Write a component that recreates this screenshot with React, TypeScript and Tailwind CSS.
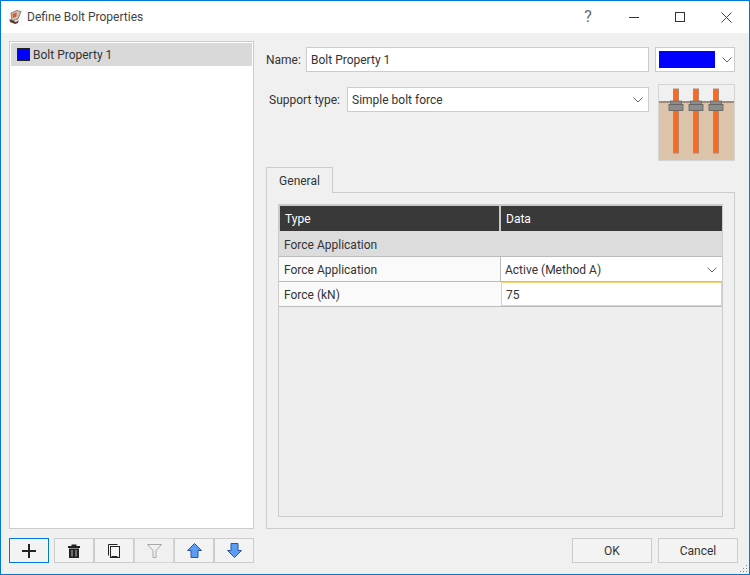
import React from "react";

const Chevron = ({ className = "" }: { className?: string }) => (
  <svg width="10" height="6" viewBox="0 0 10 6" className={className} fill="none" stroke="#666" strokeWidth="1">
    <path d="M0.5 0.5 L5 5 L9.5 0.5" />
  </svg>
);

const AppIcon = () => (
  <svg width="16" height="16" viewBox="0 0 16 16" className="shrink-0">
    <rect x="0" y="0" width="16" height="16" fill="#fafafa" />
    <path d="M4 4 L10 1.5 L14 2.5 L11 10 L5 12 Z" fill="#c9c3b8" stroke="#6a5a50" strokeWidth="0.7" />
    <path d="M5.5 5 L9.5 3.5 L9.5 7.5 L6 9 Z" fill="#e0552a" />
    <path d="M2.5 10 L9 13 L11.5 11 L11 14 L8 15 L3 13 Z" fill="#5a3a32" />
  </svg>
);

const Thumb = () => (
  <svg width="77" height="77" viewBox="0 0 77 77" className="block">
    <rect x="0.5" y="0.5" width="76" height="76" fill="#f0f0f0" stroke="#d4d4d4" />
    <rect x="1" y="18" width="75" height="58" fill="#dcc4aa" />
    <rect x="1" y="17" width="75" height="2" fill="#a08a78" />
    {[18, 38, 58].map((x) => (
      <g key={x}>
        <rect x={x - 2.5} y="5" width="5" height="64" fill="#fb6a1e" stroke="#b08a70" strokeWidth="1" />
        <rect x={x - 5.5} y="17" width="11" height="3.5" fill="#8a8a8a" stroke="#666" strokeWidth="0.7" />
        <rect x={x - 7} y="20.5" width="14" height="6" fill="#8c8c8c" stroke="#5f5f5f" strokeWidth="0.8" />
      </g>
    ))}
  </svg>
);

const ToolButton = ({
  children,
  first,
  disabled,
}: {
  children: React.ReactNode;
  first?: boolean;
  disabled?: boolean;
}) => (
  <button
    className={
      first
        ? "w-[40px] h-[25px] flex items-center justify-center bg-[#f3f3f3] border border-[#0078d7]"
        : disabled
        ? "w-[40px] h-[25px] flex items-center justify-center bg-[#f0f0f0] border border-[#d6d6d6]"
        : "w-[40px] h-[25px] flex items-center justify-center bg-[#f3f3f3] border border-[#cccccc]"
    }
  >
    {children}
  </button>
);

export default function App() {
  return (
    <div
      className="w-[750px] h-[575px] flex flex-col bg-[#f0f0f0] border border-[#0078d7] text-[12px] text-[#333333] relative overflow-hidden"
      style={{ fontFamily: 'Roboto, "Noto Sans", sans-serif' }}
    >
      {/* title bar */}
      <div className="h-[32px] bg-white flex items-center shrink-0">
        <div className="ml-[6px]">
          <AppIcon />
        </div>
        <span className="ml-[4px] text-[#444]">Define Bolt Properties</span>
        <div className="ml-auto flex items-center text-[#555]">
          <span className="w-[46px] text-center text-[16px] text-[#666]">?</span>
          <div className="w-[46px] flex justify-center">
            <div className="w-[10px] h-px bg-[#333]" />
          </div>
          <div className="w-[46px] flex justify-center">
            <div className="w-[10px] h-[10px] border border-[#333]" />
          </div>
          <div className="w-[46px] flex justify-center">
            <svg width="11" height="11" viewBox="0 0 11 11" stroke="#444" strokeWidth="1">
              <path d="M0.5 0.5 L10.5 10.5 M10.5 0.5 L0.5 10.5" />
            </svg>
          </div>
        </div>
      </div>

      {/* main */}
      <div className="flex-1 flex flex-col px-[8px] pt-[8px]">
        <div className="flex h-[488px] gap-[12px]">
          {/* list */}
          <div className="w-[245px] h-full bg-white border border-[#cccccc] p-[1px]">
            <div className="h-[23px] bg-[#d9d9d9] flex items-center pl-[6px]">
              <div className="w-[13px] h-[13px] bg-[#0000ff] border border-[#222]" />
              <span className="ml-[3px]">Bolt Property 1</span>
            </div>
          </div>

          {/* right */}
          <div className="w-[469px] flex flex-col">
            <div className="flex pt-[6px] h-[43px]">
              <span className="w-[40px] h-[25px] flex items-center">Name:</span>
              <div className="w-[343px] h-[25px] bg-white border border-[#cccccc] flex items-center pl-[4px]">
                Bolt Property 1
              </div>
              <div className="ml-[6px] w-[80px] h-[25px] bg-white border border-[#cccccc] flex items-center pl-[3px]">
                <div className="w-[56px] h-[17px] bg-[#0000ff]" />
                <Chevron className="ml-[7px]" />
              </div>
            </div>
            <div className="flex h-[83px]">
              <span className="w-[81px] h-[25px] flex items-center justify-end pr-[7px] mt-[3px] whitespace-nowrap">
                Support type:
              </span>
              <div className="w-[302px] h-[25px] mt-[3px] bg-white border border-[#cccccc] flex items-center pl-[4px] pr-[5px] justify-between">
                <span>Simple bolt force</span>
                <Chevron />
              </div>
              <div className="ml-[9px]">
                <Thumb />
              </div>
            </div>
            <div className="flex">
              <div className="w-[67px] h-[26px] -mb-px bg-[#f0f0f0] border border-[#cccccc] border-b-0 flex items-center justify-center pt-[1px] z-10">
                General
              </div>
            </div>
            <div className="flex-1 min-h-0 border border-[#cccccc] p-[11px]">
              <div className="h-full w-[445px] border border-[#cccccc] bg-[#eeeeee] flex flex-col">
                <div className="flex h-[26px] bg-[#393939] text-white border-t border-l border-t-[#c8c8c8] border-l-[#c8c8c8] shrink-0">
                  <div className="w-[221px] pl-[5px] flex items-center border-r-2 border-[#c8c8c8]">Type</div>
                  <div className="flex-1 pl-[5px] flex items-center">Data</div>
                </div>
                <div className="h-[26px] bg-[#dcdcdc] border-b border-[#bbbbbb] flex items-center pl-[5px] pt-[2px] shrink-0">
                  Force Application
                </div>
                <div className="h-[25px] flex border-b border-[#bbbbbb] shrink-0">
                  <div className="w-[222px] bg-[#fafafa] border-r border-[#bbbbbb] flex items-center pl-[5px] pt-[2px]">
                    Force Application
                  </div>
                  <div className="flex-1 bg-white flex items-center justify-between pl-[4px] pr-[5px] pt-[1px]">
                    <span>Active (Method A)</span>
                    <Chevron />
                  </div>
                </div>
                <div className="h-[25px] flex border-b border-[#bbbbbb] shrink-0">
                  <div className="w-[222px] bg-[#fafafa] flex items-center pl-[5px] pt-[2px]">Force (kN)</div>
                  <div className="flex-1 bg-white border border-[#f2d675] flex items-center pl-[4px] pt-[2px]">75</div>
                </div>
              </div>
            </div>
          </div>
        </div>

        {/* bottom */}
        <div className="flex mt-[9px] items-start">
          <ToolButton first>
            <svg width="14" height="14" viewBox="0 0 14 14" stroke="#222" strokeWidth="2">
              <path d="M7 0 V14 M0 7 H14" />
            </svg>
          </ToolButton>
          <div className="w-[5px]" />
          <ToolButton>
            <svg width="12" height="14" viewBox="0 0 12 14">
              <path d="M3.5 0.5 H8.5 V2 H12 V4 H0 V2 H3.5 Z" fill="#222" />
              <path d="M1 4.5 H11 V14 H1 Z" fill="#222" />
              <path d="M4 6 V12.5 M8 6 V12.5" stroke="#bbb" strokeWidth="1" />
            </svg>
          </ToolButton>
          <ToolButton>
            <svg width="12" height="14" viewBox="0 0 12 14" fill="none" stroke="#222" strokeWidth="1">
              <path d="M9.5 0.5 H0.5 V11.5" />
              <rect x="2.5" y="2.5" width="9" height="11" />
              <path d="M9.5 12.5 H3.5" />
            </svg>
          </ToolButton>
          <ToolButton disabled>
            <svg width="15" height="14" viewBox="0 0 15 14" fill="none" stroke="#a8a8a8" strokeWidth="1">
              <path d="M0.5 0.5 H14.5 L9 6.5 V13.5 H6 V6.5 Z" />
            </svg>
          </ToolButton>
          <ToolButton>
            <svg width="15" height="15" viewBox="0 0 15 15">
              <path d="M7.5 0.5 L14.5 7.5 H11 V14.5 H4 V7.5 H0.5 Z" fill="#5b9cf8" stroke="#2f5597" strokeWidth="1" />
            </svg>
          </ToolButton>
          <ToolButton>
            <svg width="15" height="15" viewBox="0 0 15 15">
              <path d="M7.5 14.5 L14.5 7.5 H11 V0.5 H4 V7.5 H0.5 Z" fill="#5b9cf8" stroke="#2f5597" strokeWidth="1" />
            </svg>
          </ToolButton>
          <button className="ml-auto w-[80px] h-[25px] bg-[#f3f3f3] border border-[#cccccc]">OK</button>
          <button className="ml-[6px] w-[80px] h-[25px] bg-[#f3f3f3] border border-[#cccccc] mr-[3px]">Cancel</button>
        </div>
      </div>

      {/* size grip */}
      <svg width="8" height="8" viewBox="0 0 8 8" className="absolute right-[1px] bottom-[1px]" fill="#8a8a8a">
        <rect x="6" y="0" width="1" height="1" />
        <rect x="3" y="3" width="1" height="1" />
        <rect x="6" y="3" width="1" height="1" />
        <rect x="0" y="6" width="1" height="1" />
        <rect x="3" y="6" width="1" height="1" />
        <rect x="6" y="6" width="1" height="1" />
      </svg>
    </div>
  );
}
